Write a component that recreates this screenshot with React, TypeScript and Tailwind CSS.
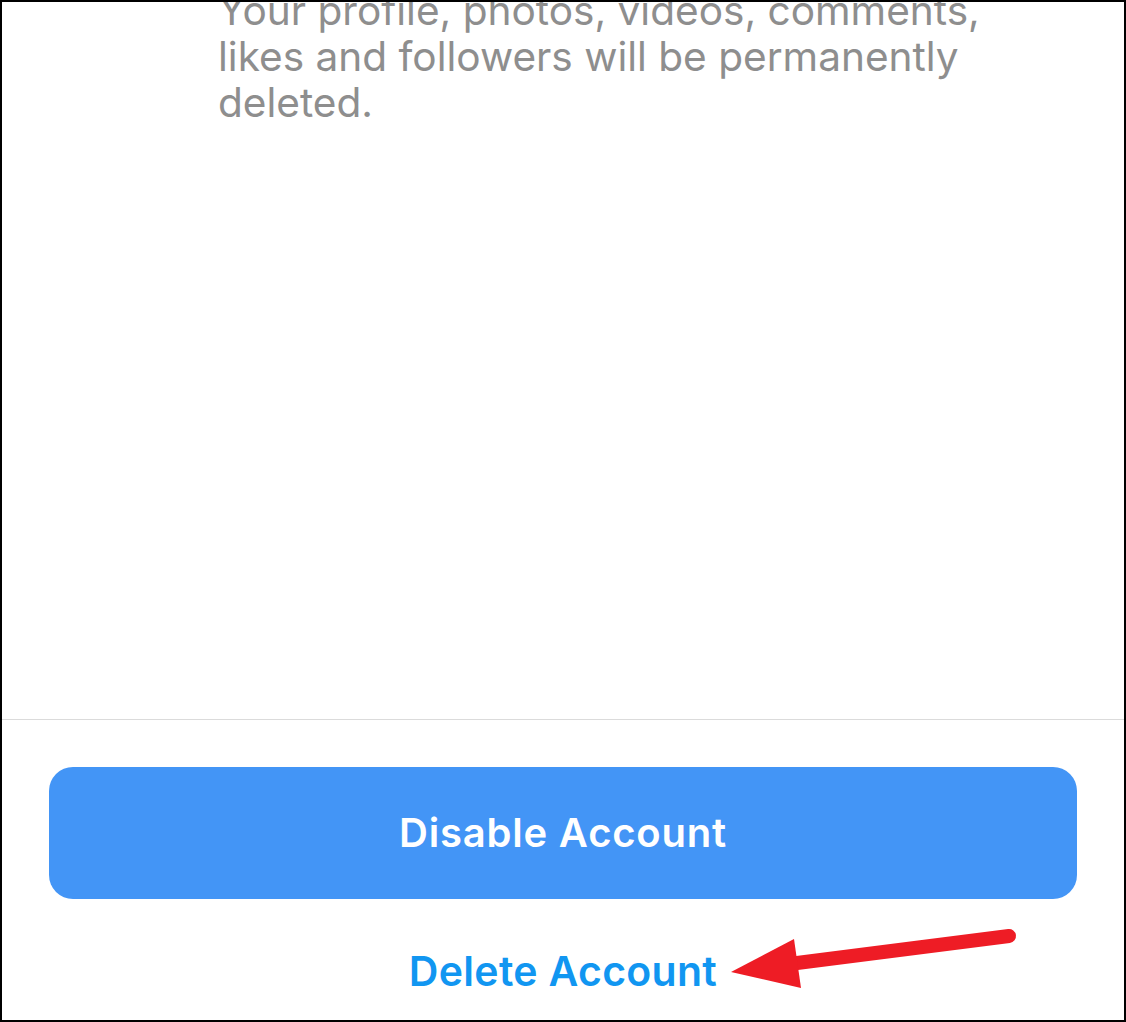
export default function App() {
  return (
    <div className="h-[1022px] w-[1126px] overflow-hidden border-2 border-black bg-white font-['Inter',sans-serif] flex flex-col">
      <div className="flex-1 overflow-hidden">
        <p className="ml-[216px] -mt-[14px] w-[800px] text-[40.6px] leading-[46px] text-[#8e8e8e]">
          Your profile, photos, videos, comments, likes and followers will be permanently deleted.
        </p>
      </div>
      <div className="h-[301px] border-t border-[#dbdbdb] px-[47px] pt-[47px] flex flex-col items-center">
        <button className="h-[132px] w-full rounded-[24px] bg-[#4395f6] text-[40px] font-semibold tracking-[0.8px] text-white">
          Disable Account
        </button>
        <div className="relative mt-[48px]">
          <span className="text-[41px] font-semibold tracking-[0.3px] leading-[48px] text-[#1196f1]">Delete Account</span>
          <svg className="absolute left-[calc(100%+8px)] -top-[20px]" width="300" height="80" viewBox="0 0 300 80">
            <line x1="72" y1="36" x2="284" y2="9" stroke="#ee1c25" strokeWidth="14" strokeLinecap="round" />
            <polygon points="6,45 69,12 76,61" fill="#ee1c25" />
          </svg>
        </div>
      </div>
    </div>
  );
}
